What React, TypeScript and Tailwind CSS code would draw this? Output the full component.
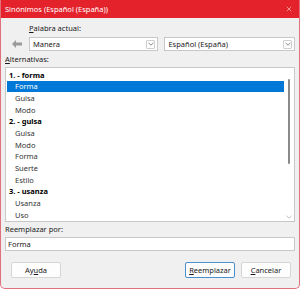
import {X} from "lucide-react";

type Row = {label: string; header?: boolean; selected?: boolean};

const rows: Row[] = [
  {label: "1. - forma", header: true},
  {label: "Forma", selected: true},
  {label: "Guisa"},
  {label: "Modo"},
  {label: "2. - guisa", header: true},
  {label: "Guisa"},
  {label: "Modo"},
  {label: "Forma"},
  {label: "Suerte"},
  {label: "Estilo"},
  {label: "3. - usanza", header: true},
  {label: "Usanza"},
  {label: "Uso"}
];

const Chevron = ({color = "#7a7a7a"}: {color?: string}) => (
  <svg width="6" height="4" viewBox="0 0 6 4">
    <polyline points="0.5,0.8 3,3.2 5.5,0.8" fill="none" stroke={color} strokeWidth="0.9" />
  </svg>
);

const Combo = ({value, className}: {value: string; className: string}) => (
  <div
    className={`flex h-[14px] items-center justify-between border border-[#c8c8c8] bg-white pl-[3px] pr-[2px] ${className}`}
  >
    <span className="truncate">{value}</span>
    <div className="flex h-[9px] w-[9px] items-center justify-center rounded-[1px] border border-[#cfcfcf] bg-white">
      <Chevron />
    </div>
  </div>
);

const Btn = ({children, primary}: {children: React.ReactNode; primary?: boolean}) => (
  <button
    className={`flex h-[16px] w-[50px] items-center justify-center rounded-[2px] border bg-[#fdfdfd] text-[#1a1a1a] ${
      primary ? "border-[#4a8fd0]" : "border-[#d6d6d6]"
    }`}
  >
    {children}
  </button>
);

export default function App() {
  return (
    <div
      className="flex h-[289px] w-[300px] flex-col overflow-hidden rounded-b-[5px] border-x border-b border-[#e0707c] bg-[#f0f0f0] text-[7.5px] leading-[10px] text-[#1a1a1a]"
      style={{fontFamily: '"Noto Sans", "Open Sans", sans-serif'}}
    >
      <div className="flex h-[18px] shrink-0 items-center justify-between bg-[#e4222c] pl-[4px] pr-[6px] text-white">
        <span>Sinónimos (Español (España))</span>
        <X size={8} strokeWidth={1.5} />
      </div>

      <div className="flex flex-1 flex-col px-[4px]">
        <div className="mt-[5px] pl-[24px]">
          <span className="underline">P</span>alabra actual:
        </div>

        <div className="mt-[4px] flex items-center">
          <div className="flex w-[24px] justify-center">
            <svg width="10" height="8" viewBox="0 0 10 8">
              <polygon points="0,4 4,0 4,2.5 10,2.5 10,5.5 4,5.5 4,8" fill="#9a9a9a" />
            </svg>
          </div>
          <Combo value="Manera" className="w-[130px]" />
          <Combo value="Español (España)" className="ml-[6px] w-[131px]" />
        </div>

        <div className="mt-[3px]">
          <span className="underline">A</span>lternativas:
        </div>

        <div className="mt-[3px] flex h-[155px] border border-[#c8c8c8] bg-white">
          <div className="flex-1 pl-[1px] pt-[1px]">
            {rows.map((row, i) => (
              <div
                key={i}
                className={`flex h-[11.67px] items-center ${
                  row.header ? "pl-[2px] font-bold text-black" : "pl-[8px] text-[#333333]"
                } ${row.selected ? "bg-[#0078d7] text-white" : ""}`}
              >
                {row.label}
              </div>
            ))}
          </div>
          <div className="flex w-[10px] flex-col items-center pt-[11px]">
            <div className="h-[85px] w-[2px] rounded-full bg-[#8a8a8a]" />
            <div className="flex-1" />
            <div className="mb-[2px]">
              <Chevron color="#b8b8b8" />
            </div>
          </div>
        </div>

        <div className="mt-[2px]">Reemplazar por:</div>

        <div className="mt-[3px] flex h-[14px] items-center border border-[#c8c8c8] bg-white pl-[2px]">
          Forma
        </div>

        <div className="mt-[11px] flex items-center pl-[6px] pr-[4px]">
          <Btn>
            <span>
              Ay<span className="underline">u</span>da
            </span>
          </Btn>
          <div className="flex-1" />
          <Btn primary>
            <span>
              <span className="underline">R</span>eemplazar
            </span>
          </Btn>
          <div className="w-[6px]" />
          <Btn>
            <span>
              <span className="underline">C</span>ancelar
            </span>
          </Btn>
        </div>
      </div>
    </div>
  );
}
